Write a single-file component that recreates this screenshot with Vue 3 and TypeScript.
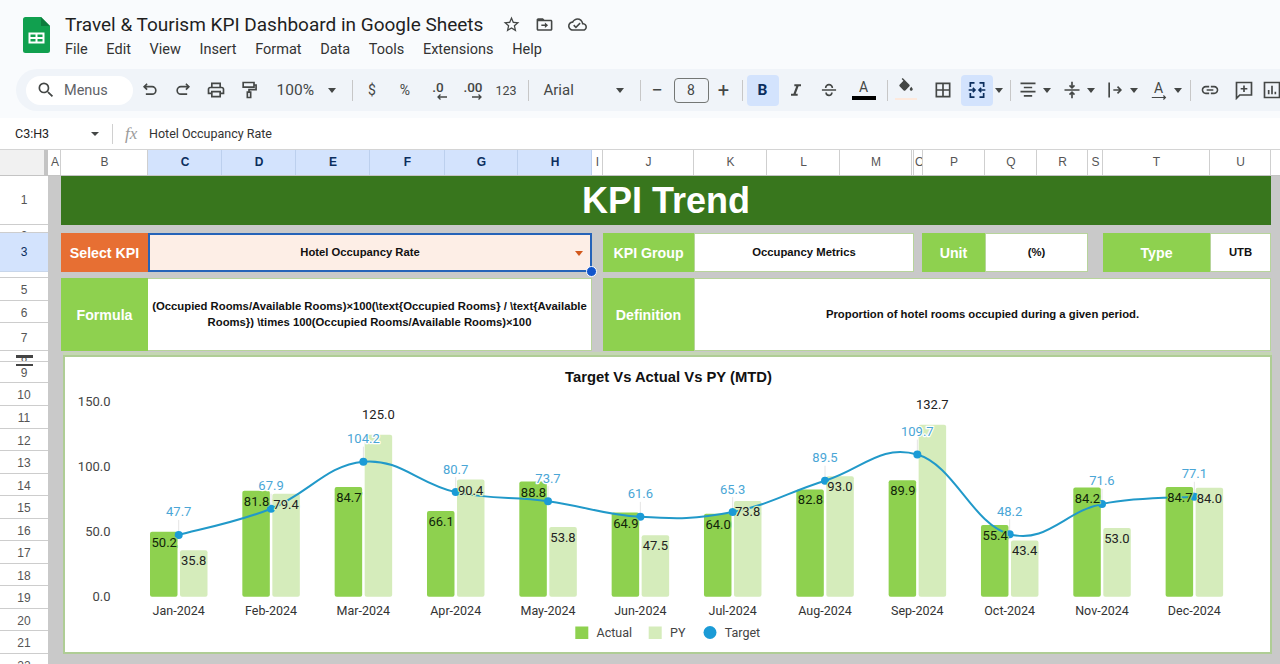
<script setup lang="ts">
const menus = ['File', 'Edit', 'View', 'Insert', 'Format', 'Data', 'Tools', 'Extensions', 'Help']

const columns = [
  { n: 'A', w: 12 }, { n: 'B', w: 87 }, { n: 'C', w: 74, s: true }, { n: 'D', w: 74, s: true },
  { n: 'E', w: 74, s: true }, { n: 'F', w: 75, s: true }, { n: 'G', w: 73, s: true }, { n: 'H', w: 74, s: true },
  { n: 'I', w: 11 }, { n: 'J', w: 91 }, { n: 'K', w: 73 }, { n: 'L', w: 73 }, { n: 'M', w: 72 },
  { n: '', w: 2 }, { n: 'O', w: 9 }, { n: 'P', w: 62 }, { n: 'Q', w: 52 }, { n: 'R', w: 51 },
  { n: 'S', w: 15 }, { n: 'T', w: 107 }, { n: 'U', w: 61 },
]

const rows = [49, 8, 39, 6, 23, 22, 28, 11, 21, 23, 23, 22, 23, 22, 23, 22, 23, 22, 23, 22, 23, 23]
  .map((h, i) => ({ n: i + 1, h, sel: i === 2, small: h < 12, std: h >= 12 && h < 30 }))

const months = ['Jan', 'Feb', 'Mar', 'Apr', 'May', 'Jun', 'Jul', 'Aug', 'Sep', 'Oct', 'Nov', 'Dec']
const actual = [50.2, 81.8, 84.7, 66.1, 88.8, 64.9, 64.0, 82.8, 89.9, 55.4, 84.2, 84.7]
const py = [35.8, 79.4, 125.0, 90.4, 53.8, 47.5, 73.8, 93.0, 132.7, 43.4, 53.0, 84.0]
const target = [47.7, 67.9, 104.2, 80.7, 73.7, 61.6, 65.3, 89.5, 109.7, 48.2, 71.6, 77.1]

const base = 596.7
const unit = 1.296
const yOf = (v: number) => base - v * unit

const groups = months.map((m, i) => {
  const c = 178.7 + i * 92.33
  const outside = py[i] > 100
  return {
    label: `${m}-2024`,
    c,
    a: actual[i],
    p: py[i],
    t: target[i],
    aTop: yOf(actual[i]),
    pTop: yOf(py[i]),
    tY: yOf(target[i]),
    pLabelY: outside ? yOf(py[i]) - 20 : yOf(py[i]) + 10.5,
    outside,
  }
})

const ticks = ['150.0', '100.0', '50.0', '0.0'].map((label, i) => ({ label, y: 401.5 + i * 65 }))

const pts = groups.map((g) => [g.c, g.tY])
const curve = pts
  .map((p, i) => {
    if (i === 0) return `M${p[0]} ${p[1]}`
    const p0 = pts[Math.max(i - 2, 0)]
    const p1 = pts[i - 1]
    const p3 = pts[Math.min(i + 1, pts.length - 1)]
    const k = 1 / 5
    const c1x = p1[0] + (p[0] - p0[0]) * k
    const c1y = p1[1] + (p[1] - p0[1]) * k
    const c2x = p[0] - (p3[0] - p1[0]) * k
    const c2y = p[1] - (p3[1] - p1[1]) * k
    return `C${c1x} ${c1y} ${c2x} ${c2y} ${p[0]} ${p[1]}`
  })
  .join(' ')
</script>

<template>
  <div class="app">
    <header class="top">
      <svg class="logo" viewBox="0 0 27 36">
        <path d="M2.5 0H18l9 9v24.500a2.500 2.500 0 0 1-2.500 2.500h-22A2.500 2.500 0 0 1 0 33.500v-31A2.500 2.500 0 0 1 2.500 0z" fill="#11a04f" />
        <path d="M18 0l9 9h-9z" fill="#0c7c3d" />
        <path d="M5.500 15.500h16v11h-16z M7.500 17.500v2.500h5v-2.500z M14.500 17.500v2.500h5v-2.500z M7.500 22v2.500h5V22z M14.500 22v2.500h5V22z" fill="#fff" fill-rule="evenodd" />
      </svg>
      <div class="titles">
        <div class="title-row">
          <span class="doc">Travel &amp; Tourism KPI Dashboard in Google Sheets</span>
          <svg class="head-ic first" viewBox="0 0 24 24"><path d="M22 9.240l-7.190-.62L12 2 9.190 8.630 2 9.240l5.460 4.730L5.820 21 12 17.270 18.180 21l-1.630-7.030L22 9.240zM12 15.400l-3.760 2.270 1-4.280-3.320-2.880 4.380-.38L12 6.100l1.710 4.040 4.380.38-3.320 2.880 1 4.280L12 15.400z" /></svg>
          <svg class="head-ic" viewBox="0 0 24 24"><path d="M20 6h-8l-2-2H4c-1.100 0-2 .9-2 2v12c0 1.100.9 2 2 2h16c1.100 0 2-.9 2-2V8c0-1.100-.9-2-2-2zm0 12H4V8h16v10z M12.500 9.500l4 3.500-4 3.500V14H8v-2h4.500z" /></svg>
          <svg class="head-ic" viewBox="0 0 24 24"><path d="M19.350 10.040C18.670 6.590 15.640 4 12 4 9.110 4 6.600 5.640 5.350 8.040 2.340 8.360 0 10.910 0 14c0 3.310 2.690 6 6 6h13c2.760 0 5-2.240 5-5 0-2.640-2.050-4.780-4.650-4.960zM19 18H6c-2.210 0-4-1.790-4-4 0-2.050 1.530-3.760 3.560-3.970l1.070-.11.5-.95C8.080 7.140 9.940 6 12 6c2.620 0 4.880 1.860 5.390 4.430l.3 1.500 1.530.11c1.560.1 2.780 1.410 2.780 2.960 0 1.650-1.350 3-3 3zm-9-3.820l-2.090-2.090L6.500 13.500 10 17l6.010-6.010-1.410-1.410z" /></svg>
        </div>
        <nav class="menu"><span v-for="m in menus" :key="m">{{ m }}</span></nav>
      </div>
    </header>

    <div class="toolbar-wrap">
      <div class="toolbar">
        <div class="search">
          <svg viewBox="0 0 24 24" class="search-ic"><path d="M15.500 14h-.79l-.28-.27A6.470 6.470 0 0 0 16 9.500 6.500 6.500 0 1 0 9.500 16c1.610 0 3.090-.59 4.230-1.570l.27.28v.79l5 4.990L20.490 19l-4.990-5zm-6 0C7.010 14 5 11.990 5 9.500S7.010 5 9.500 5 14 7.010 14 9.500 11.990 14 9.500 14z" /></svg>
          <span>Menus</span>
        </div>
        <div class="ib"><svg viewBox="0 0 24 24" class="st"><path d="M5 8h9.500a4.500 4.500 0 0 1 0 9H7M8.500 4.500L5 8l3.500 3.500" /></svg></div>
        <div class="ib"><svg viewBox="0 0 24 24" class="st"><path d="M19 8H9.500a4.500 4.500 0 0 0 0 9H17M15.500 4.500L19 8l-3.500 3.500" /></svg></div>
        <div class="ib"><svg viewBox="0 0 24 24" class="fi"><path d="M19 8h-1V3H6v5H5c-1.660 0-3 1.340-3 3v6h4v4h12v-4h4v-6c0-1.660-1.340-3-3-3zM8 5h8v3H8V5zm8 12v2H8v-4h8v2zm2-2v-2H6v2H4v-4c0-.55.45-1 1-1h14c.55 0 1 .45 1 1v4h-2z" /></svg></div>
        <div class="ib"><svg viewBox="0 0 24 24" class="st"><path d="M5 3h13v5.500H5zM18 6h2.500v5.500H12v3M10 14.500h4V21h-4z" /></svg></div>
        <div class="zoom"><span>100%</span><i class="caret" /></div>
        <i class="div ml6" />
        <div class="ib ml3 tx">$</div>
        <div class="ib tx">%</div>
        <div class="ib dec">
          <span>.0</span>
          <svg viewBox="0 0 12 6" class="dec-ar"><path d="M11 3H2M4.500 .5L2 3l2.500 2.500" /></svg>
        </div>
        <div class="ib dec ml2">
          <span>.00</span>
          <svg viewBox="0 0 12 6" class="dec-ar"><path d="M1 3h9M7.500 .5L10 3 7.500 5.500" /></svg>
        </div>
        <div class="ib tx small">123</div>
        <i class="div ml5" />
        <div class="font"><span>Arial</span><i class="caret" /></div>
        <i class="div" />
        <div class="ib w33 tx-lg">−</div>
        <div class="size">8</div>
        <div class="ib w30 tx-lg">+</div>
        <i class="div ml3" />
        <div class="ib w32 ml4 on bold">B</div>
        <div class="ib w32 ml1"><svg viewBox="0 0 24 24" class="fi"><path d="M10 5v2.500h2.300L8.900 16.500H6V19h8v-2.500h-2.300l3.400-9H18V5z" /></svg></div>
        <div class="ib w32 ml1"><svg viewBox="0 0 24 24" class="st"><path d="M3.500 12h17M8 9.500a4 4 0 0 1 8 0M8.500 15a3.500 3.500 0 0 0 7 0" /></svg></div>
        <div class="ib w32 ml3 color-a"><span>A</span><i /></div>
        <i class="div ml7" />
        <div class="ib w32 ml2 fill-ic">
          <svg viewBox="0 0 24 24" class="fi"><path d="M16.560 8.940L7.620 0 6.210 1.410l2.380 2.380-5.150 5.150c-.59.59-.59 1.540 0 2.120l5.500 5.500c.29.29.68.44 1.060.44s.77-.15 1.060-.44l5.500-5.500c.59-.58.59-1.530 0-2.120zM19 11.500s-2 2.170-2 3.500c0 1.100.9 2 2 2s2-.9 2-2c0-1.330-2-3.500-2-3.500z" /></svg>
          <i />
        </div>
        <div class="ib w32 ml5"><svg viewBox="0 0 24 24" class="st"><path d="M4 4h16v16H4zM12 4v16M4 12h16" /></svg></div>
        <div class="ib w32 ml2 on"><svg viewBox="0 0 24 24" class="st navy"><path d="M9 3.500H4v5M4 15.500v5h5M15 3.500h5v5M20 15.500v5h-5M2 12h7.500M7 9.500L9.500 12 7 14.500M22 12h-7.500M17 9.500L14.500 12l2.500 2.500" /></svg></div>
        <div class="cw12"><i class="caret" /></div>
        <i class="div ml5" />
        <div class="ib w28 ml3"><svg viewBox="0 0 24 24" class="st"><path d="M3 4h18M7 9h10M3 14h18M7 19h10" /></svg></div>
        <div class="cw10"><i class="caret" /></div>
        <div class="ib w28 ml6"><svg viewBox="0 0 24 24" class="st"><path d="M3 12h18M12 2v7M9 6.500L12 9.500l3-3M12 22v-7M9 17.500l3-3 3 3" /></svg></div>
        <div class="cw10"><i class="caret" /></div>
        <div class="ib w28 ml5"><svg viewBox="0 0 24 24" class="st"><path d="M5 3v18M10 12h9M15 8l4 4-4 4" /></svg></div>
        <div class="cw10"><i class="caret" /></div>
        <div class="ib w28 ml6 rot"><span>A</span><svg viewBox="0 0 20 6" class="rot-ar"><path d="M1 3h17M15.500 .5L18 3l-2.500 2.500" /></svg></div>
        <div class="cw10"><i class="caret" /></div>
        <i class="div ml7" />
        <div class="ib w28 ml5"><svg viewBox="0 0 24 24" class="fi"><path d="M3.900 12c0-1.710 1.390-3.100 3.100-3.100h4V7H7c-2.760 0-5 2.240-5 5s2.240 5 5 5h4v-1.900H7c-1.710 0-3.100-1.390-3.100-3.100zM8 13h8v-2H8v2zm9-6h-4v1.900h4c1.710 0 3.100 1.390 3.100 3.100s-1.390 3.100-3.100 3.100h-4V17h4c2.760 0 5-2.240 5-5s-2.240-5-5-5z" /></svg></div>
        <div class="ib w28 ml6"><svg viewBox="0 0 24 24" class="st"><path d="M3 3h18v15H7l-4 4zM12 6.500v8M8 10.500h8" /></svg></div>
        <div class="ib w28"><svg viewBox="0 0 24 24" class="st"><path d="M3 3h18v18H3zM8 17v-5M12 17V7M16 17v-3" /></svg></div>
      </div>
    </div>

    <div class="fbar">
      <span class="name">C3:H3</span>
      <i class="caret name-caret" />
      <i class="fdiv" />
      <span class="fx">fx</span>
      <span class="ftext">Hotel Occupancy Rate</span>
    </div>

    <div class="colhead">
      <div class="corner" />
      <div
        v-for="c in columns"
        :key="c.n + c.w"
        class="col"
        :class="{ sel: c.s }"
        :style="{ width: c.w + 'px' }"
      >{{ c.n }}</div>
    </div>

    <div class="sheet">
      <div class="rowhead">
        <div
          v-for="r in rows"
          :key="r.n"
          class="row"
          :class="{ sel: r.sel, tiny: r.small, std: r.std }"
          :style="{ height: r.h + 'px' }"
        ><span>{{ r.n }}</span></div>
        <i class="hide-bar one" />
        <i class="hide-bar two" />
      </div>

      <div class="body">
        <div class="banner">KPI Trend</div>

        <div class="label orange kpi">Select KPI</div>
        <div class="picker">
          <span>Hotel Occupancy Rate</span>
          <i class="pick-caret" />
          <i class="handle" />
        </div>
        <div class="label g-j">KPI Group</div>
        <div class="val v-group">Occupancy Metrics</div>
        <div class="label l-unit">Unit</div>
        <div class="val v-unit">(%)</div>
        <div class="label l-type">Type</div>
        <div class="val v-type">UTB</div>

        <div class="label r2 kpi">Formula</div>
        <div class="val r2 v-formula">(Occupied Rooms/Available Rooms)×100(\text{Occupied Rooms} / \text{Available Rooms}) \times 100(Occupied Rooms/Available Rooms)×100</div>
        <div class="label r2 g-j">Definition</div>
        <div class="val r2 v-def">Proportion of hotel rooms occupied during a given period.</div>

        <div class="chart">
          <svg viewBox="65 357 1205 295" width="1205" height="295" class="plot">
            <text x="668.500" y="377" class="c-title">Target Vs Actual Vs PY (MTD)</text>
            <text v-for="t in ticks" :key="t.label" x="110.500" :y="t.y" class="tick">{{ t.label }}</text>

            <g v-for="g in groups" :key="g.label">
              <rect :x="g.c - 28.700" :y="g.aTop" width="27.500" :height="base - g.aTop" rx="2" class="b-a" />
              <rect :x="g.c + 1.300" :y="g.pTop" width="27.500" :height="base - g.pTop" rx="2" class="b-p" />
              <text :x="g.c" y="610" class="cat">{{ g.label }}</text>
              <line :x1="g.c" :x2="g.c" :y1="g.tY - 15" :y2="g.tY" class="lead" />
            </g>

            <path :d="curve" class="line" />
            <circle v-for="g in groups" :key="'d' + g.label" :cx="g.c" :cy="g.tY" r="4" class="dot" />

            <g v-for="g in groups" :key="'l' + g.label">
              <text :x="g.c - 14.500" :y="g.aTop + 10.500" class="num on-a">{{ g.a.toFixed(1) }}</text>
              <text :x="g.c + 15" :y="g.pLabelY" class="num" :class="g.outside ? 'out' : 'on-p'">{{ g.p.toFixed(1) }}</text>
              <text :x="g.c" :y="g.tY - 23" class="num tgt">{{ g.t.toFixed(1) }}</text>
            </g>

            <rect x="575.300" y="626.500" width="13" height="12.500" class="b-a" />
            <text x="596.500" y="632.500" class="leg">Actual</text>
            <rect x="648.700" y="626.500" width="13" height="12.500" class="b-p" />
            <text x="670" y="632.500" class="leg">PY</text>
            <circle cx="710" cy="632.500" r="6.500" class="dot" />
            <text x="724.700" y="632.500" class="leg">Target</text>
          </svg>
        </div>
      </div>
    </div>
  </div>
</template>

<style>
html, body { margin: 0; background: #fff; overflow: hidden; }
</style>

<style scoped>
.app {
  width: 1280px;
  height: 664px;
  overflow: hidden;
  font-family: Roboto, "Liberation Sans", sans-serif;
  color: #3c4043;
  background: #f9fbfd;
}
i { display: block; font-style: normal; }

/* header */
.top { display: flex; height: 69px; box-sizing: border-box; padding: 11px 0 0 23px; }
.logo { width: 27px; height: 36px; margin-top: 6px; }
.titles { margin-left: 15px; }
.title-row { display: flex; align-items: center; height: 26px; }
.doc { font-size: 19px; color: #1f1f1f; white-space: nowrap; width: 417px; }
.head-ic { width: 19px; height: 19px; fill: #444746; margin-right: 14px; }
.head-ic.first { margin-left: 20px; }
.menu { display: flex; gap: 18.600px; font-size: 14.500px; color: #333; margin-top: 3px; line-height: 20px; }

/* toolbar */
.toolbar-wrap { height: 49px; }
.toolbar {
  display: flex;
  align-items: center;
  height: 42px;
  width: 1290px;
  margin-left: 16px;
  padding-left: 10px;
  box-sizing: border-box;
  background: #f0f4f9;
  border-radius: 21px 0 0 21px;
  overflow: hidden;
}
.search {
  flex: none;
  width: 107px;
  height: 29px;
  background: #fff;
  border-radius: 15px;
  display: flex;
  align-items: center;
  font-size: 14.500px;
  color: #5f6368;
  box-sizing: border-box;
  padding-left: 10px;
  margin-right: .5px;
}
.search-ic { width: 20px; height: 20px; fill: #444746; margin-right: 8px; }
.ib {
  flex: none;
  width: 33px;
  height: 31px;
  display: flex;
  align-items: center;
  justify-content: center;
  position: relative;
  border-radius: 4px;
}
.ib svg { width: 20px; height: 20px; }
.st { fill: none; stroke: #444746; stroke-width: 2; }
.st.navy { stroke: #0b2e5e; }
.fi { fill: #444746; }
.w33 { width: 33px; }
.w32 { width: 32px; }
.w30 { width: 30px; }
.w28 { width: 28px; }
.ml1 { margin-left: 1px; }
.ml2 { margin-left: 2px; }
.ml3 { margin-left: 3px; }
.ml4 { margin-left: 4px; }
.ml5 { margin-left: 5px; }
.ml6 { margin-left: 6px; }
.ml7 { margin-left: 7px; }
.div { flex: none; width: 1px; height: 21px; background: #c7c7c7; }
.caret {
  width: 0;
  height: 0;
  border-left: 4.500px solid transparent;
  border-right: 4.500px solid transparent;
  border-top: 5px solid #444746;
}
.zoom {
  flex: none;
  width: 80px;
  box-sizing: border-box;
  padding-left: 11px;
  display: flex;
  align-items: center;
  font-size: 15.500px;
  color: #444746;
}
.zoom .caret { margin-left: 14px; }
.tx { font-size: 14px; color: #444746; }
.small { font-size: 12.500px; }
.dec { font-size: 13.500px; font-weight: 500; color: #444746; flex-direction: column; line-height: 13px; }
.dec .dec-ar { width: 12px; height: 6px; fill: none; stroke: #444746; stroke-width: 1.300; margin-left: 8px; }
.font {
  flex: none;
  width: 111px;
  box-sizing: border-box;
  padding-left: 15px;
  display: flex;
  align-items: center;
  font-size: 15px;
  color: #444746;
}
.font .caret { margin-left: 42px; }
.tx-lg { font-size: 20px; color: #444746; }
.size {
  flex: none;
  width: 35px;
  height: 25px;
  box-sizing: border-box;
  border: 1px solid #747775;
  border-radius: 4px;
  text-align: center;
  line-height: 23px;
  font-size: 14px;
  color: #444746;
}
.on { background: #d3e3fd; }
.bold { font-weight: 700; font-size: 15.500px; color: #0b2e5e; }
.color-a { flex-direction: column; font-size: 14px; line-height: 15px; color: #444746; }
.color-a i { width: 24px; height: 3.500px; background: #000; margin-top: 1px; }
.fill-ic { flex-direction: column; }
.fill-ic svg { width: 18px; height: 18px; margin-top: -2px; }
.fill-ic i { width: 22px; height: 2px; background: #fde9dd; margin-top: 2px; }
.cw12 { flex: none; width: 12px; display: flex; justify-content: center; }
.cw10 { flex: none; width: 10px; display: flex; justify-content: center; }
.rot { flex-direction: column; font-size: 14px; line-height: 14px; color: #444746; }
.rot .rot-ar { width: 16px; height: 5px; fill: none; stroke: #444746; stroke-width: 1.500; }

/* formula bar */
.fbar {
  height: 31px;
  background: #fff;
  border-bottom: 1px solid #d4d4d4;
  display: flex;
  align-items: center;
  font-size: 12.500px;
  color: #444;
}
.name { margin-left: 15px; width: 76px; color: #222; }
.name-caret { border-left-width: 4px; border-right-width: 4px; border-top-width: 4px; }
.fdiv { width: 1px; height: 20px; background: #d0d0d0; margin-left: 13px; }
.fx { font-family: "Liberation Serif", serif; font-style: italic; font-size: 17px; color: #9a9a9a; margin-left: 12px; width: 24px; }
.ftext { color: #333; }

/* column header */
.colhead { display: flex; height: 25px; background: #fff; border-bottom: 1px solid #c4c4c4; }
.corner { width: 44px; flex: none; background: #f1f1f1; border-right: 4px solid #c4c4c4; margin-right: 1px; }
.col {
  flex: none;
  box-sizing: border-box;
  border-right: 1px solid #cfcfcf;
  padding-left: 1px;
  text-align: center;
  font-size: 12px;
  line-height: 25px;
  color: #555;
  font-family: "Liberation Sans", sans-serif;
  overflow: hidden;
}
.col.sel { background: #d3e3fd; color: #0b2e5e; font-weight: 700; border-right-color: #bcd0ee; }

/* sheet */
.sheet { display: flex; height: 488px; background: #c9c9c9; }
.rowhead { flex: none; width: 48px; background: #fff; position: relative; overflow: hidden; }
.row {
  box-sizing: border-box;
  border-bottom: 1.500px solid #cdcdcd;
  display: flex;
  align-items: center;
  justify-content: center;
  font-size: 12px;
  color: #555;
  font-family: "Liberation Sans", sans-serif;
  overflow: hidden;
}
.row.sel { background: #d3e3fd; color: #0b2e5e; border-bottom-color: #c8d6ea; }
.row.tiny { align-items: flex-start; }
.row.tiny span { margin-top: 4px; }
.row.std span { margin-top: 2px; }
.hide-bar { position: absolute; left: 16px; width: 17px; height: 2.500px; background: #444; }
.hide-bar.one { top: 179px; }
.hide-bar.two { top: 187.500px; }

.body {
  flex: none;
  margin-left: 13px;
  display: grid;
  grid-template-columns: 87px 444px 11px 91px 220px 8px 63px 103px 15px 107px 61px;
  grid-template-rows: 49px 8px 39px 6px 73px auto;
  font-family: "Liberation Sans", sans-serif;
  align-content: start;
}
.banner {
  grid-column: 1 / -1;
  grid-row: 1;
  background: #38761d;
  color: #fff;
  font-weight: 700;
  font-size: 36px;
  text-align: center;
  line-height: 49px;
}
.label {
  grid-row: 3;
  background: #8ed14f;
  color: #fff;
  font-weight: 700;
  font-size: 14.200px;
  display: flex;
  align-items: center;
  justify-content: center;
}
.label.r2, .val.r2 { grid-row: 5; }
.orange { background: #e76f33; }
.kpi { grid-column: 1; }
.g-j { grid-column: 4; }
.l-unit { grid-column: 7; }
.l-type { grid-column: 10; }
.picker {
  grid-column: 2;
  grid-row: 3;
  position: relative;
  background: #fdeee6;
  border: 2px solid #2563b8;
  box-sizing: border-box;
  display: flex;
  align-items: center;
  justify-content: center;
  font-size: 11.250px;
  font-weight: 700;
  color: #111;
  padding: 0 20px 2px 0;
}
.pick-caret {
  position: absolute;
  right: 7px;
  top: 16px;
  width: 0;
  height: 0;
  border-left: 4px solid transparent;
  border-right: 4px solid transparent;
  border-top: 5px solid #d2581c;
}
.handle {
  position: absolute;
  right: -7px;
  bottom: -7px;
  width: 9px;
  height: 9px;
  background: #1155cc;
  border: 1.500px solid #fff;
  border-radius: 50%;
}
.val {
  grid-row: 3;
  background: #fff;
  border: 1px solid #b7d49b;
  box-sizing: border-box;
  display: flex;
  align-items: center;
  justify-content: center;
  text-align: center;
  font-weight: 700;
  font-size: 11.300px;
  color: #111;
}
.v-group { grid-column: 5; padding-bottom: 2px; }
.v-unit { grid-column: 8; padding-bottom: 2px; }
.v-type { grid-column: 11; padding-bottom: 2px; }
.v-formula { grid-column: 2; line-height: 15.500px; padding: 0 4px 0; border-left: 0; }
.v-def { grid-column: 5 / -1; padding-bottom: 2px; }

.chart {
  grid-column: 1 / -1;
  grid-row: 6;
  width: 1209px;
  height: 299px;
  margin: 4px 0 0 2px;
  box-sizing: border-box;
  border: 2px solid #afcd95;
  background: #fff;
  box-shadow: 0 -3px 0 #c5d6b4;
}
.plot { display: block; font-family: Roboto, "Liberation Sans", sans-serif; }
.c-title { font: 700 14.800px "Liberation Sans", sans-serif; fill: #111; text-anchor: middle; dominant-baseline: central; }
.tick { font-size: 13px; fill: #444; text-anchor: end; dominant-baseline: central; }
.cat { font-size: 12.500px; fill: #333; text-anchor: middle; dominant-baseline: central; }
.leg { font-size: 12.500px; fill: #444; dominant-baseline: central; }
.b-a { fill: #8ed14f; }
.b-p { fill: #d5ecbb; }
.lead { stroke: #e4e4e4; stroke-width: 1; }
.line { fill: none; stroke: #2199c9; stroke-width: 2; }
.dot { fill: #1b9bd6; }
.num { font-size: 13px; text-anchor: middle; dominant-baseline: central; paint-order: stroke; stroke-width: 2.500px; stroke-linejoin: round; }
.on-a { fill: #10240a; stroke: #8ed14f; }
.on-p { fill: #222; stroke: #d5ecbb; }
.out { fill: #222; stroke: #fff; }
.tgt { fill: #4aa6d6; stroke: #fff; }
</style>
